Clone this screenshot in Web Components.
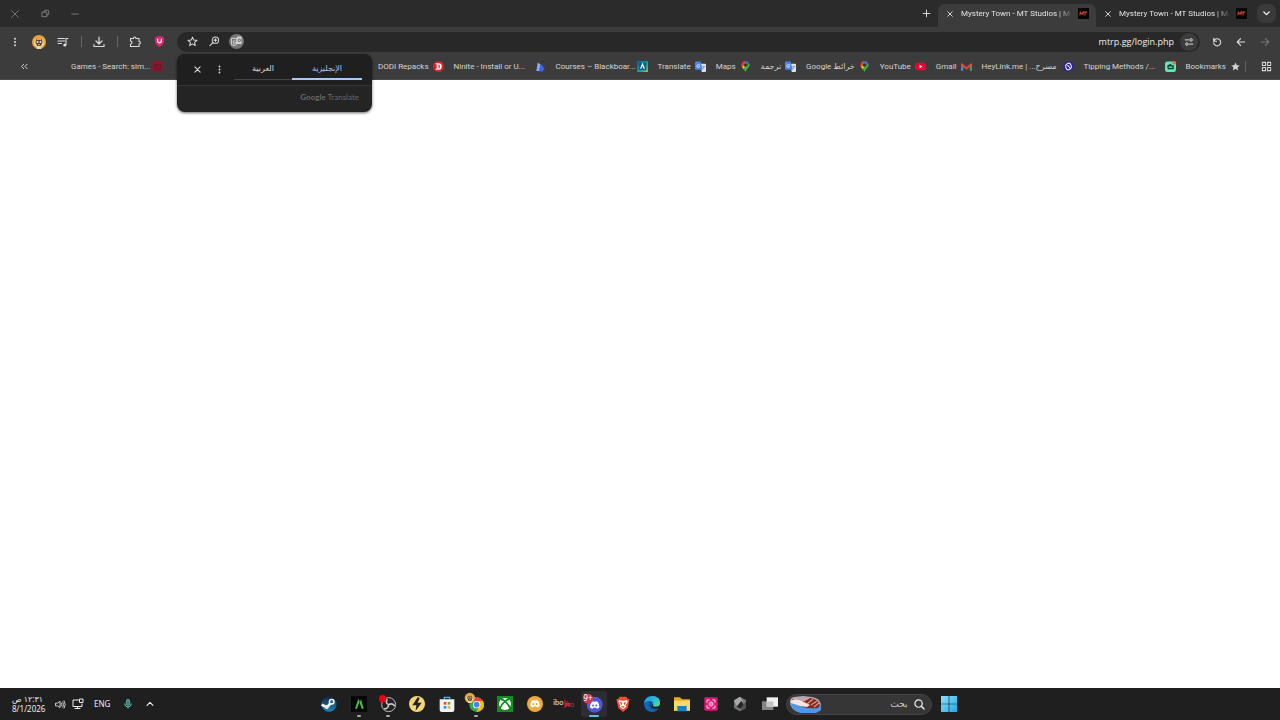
<!DOCTYPE html>
<html lang="ar">
<head>
<meta charset="utf-8">
<title>Mystery Town - MT Studios</title>
<style>
  html, body { margin: 0; height: 100%; background: #fff; }
  body { font-family: Roboto, "DejaVu Sans", sans-serif; font-size: 8px; line-height: 12px; color: #d5d5d5; }
</style>
</head>
<body>
<desk-top></desk-top>
<script>
const line = (d, w = 1.6) => `<path d="${d}" fill="none" stroke="currentColor" stroke-width="${w}" stroke-linecap="round" stroke-linejoin="round"/>`;
const discord = (x, y, s, bg) => `<g transform="translate(${x} ${y}) scale(${s})"><path fill="#fff" d="M4 1Q6 0 7 0l.6 1h2.8L11 0q1 0 3 1 3 4 3 9-2 2-4.500 2.500L11.500 11h-5l-1 1.500Q3 12 1 10 1 5 4 1z"/><ellipse cx="6.300" cy="7" rx="1.600" ry="1.800" fill="${bg}"/><ellipse cx="11.700" cy="7" rx="1.600" ry="1.800" fill="${bg}"/></g>`;
const avatar = `<circle cx="12" cy="12" r="12" fill="#e9a33c"/><path d="M4 17Q3 8 7 6l2 2h6l2-2q4 2 3 11l-4 3v4H8v-4z" fill="#f0d9a0"/><path d="M7 6l2 3 3-1 3 1 2-3 1 7-3 6H9l-3-6z" fill="#5d4327"/><circle cx="9.500" cy="12" r="1.600" fill="#eee"/><circle cx="14.500" cy="12" r="1.600" fill="#eee"/><path d="M10 16h4l-2 2z" fill="#eee"/>`;
const ICONS = {
  close: line('M5 5L19 19M19 5L5 19', 2.800),
  thinclose: line('M4 4L20 20M20 4L4 20', 1.800),
  restore: line('M5 9h10v10H5zM9 9V7q0-2 2-2h6q2 0 2 2v6q0 2-2 2h-2', 1.800),
  minimize: line('M4 12h16', 1.800),
  plus: line('M12 3v18M3 12h18', 2.600),
  down: line('M5 8l7 7 7-7', 3.600),
  up: line('M3 16l9-9 9 9', 3.200),
  more: '<g fill="currentColor"><circle cx="12" cy="4" r="2.400"/><circle cx="12" cy="12" r="2.400"/><circle cx="12" cy="20" r="2.400"/></g>',
  avatar,
  media: line('M2 5h13M2 10h13M2 15h7M18 18V5h4', 2.200) + '<circle cx="15.500" cy="18" r="3" fill="currentColor"/>',
  download: line('M12 2v13M6 10l6 6 6-6M2 17v4h20v-4', 2.400),
  puzzle: line('M3 5h6q0-3 2.500-3T14 5h6v6q3 0 3 2.500T20 16v5H3v-5q3 0 3-3t-3-3z', 2.200),
  shield: '<path d="M12 0q5 1 10 3v8q0 7-10 13Q2 18 2 11V3q5-2 10-3z" fill="#d92a77"/><path d="M8 6v5q0 4 4 4t4-4V6" fill="none" stroke="#fff" stroke-width="2.800"/>',
  star: line('M12 2.500l2.800 6.400 7 .6-5.300 4.600 1.600 6.900-6.100-3.700L5.900 21l1.600-6.900L2.200 9.500l7-.6z', 2.200),
  starfill: '<path fill="currentColor" d="M12 3l2.700 6 6.600.6-5 4.400 1.500 6.500-5.800-3.400-5.800 3.400 1.500-6.500-5-4.400 6.600-.6z"/>',
  zoom: '<circle cx="14" cy="9" r="7" fill="none" stroke="currentColor" stroke-width="2.200"/>' + line('M9 14l-7 7M11 9h6M14 6v6', 2.200),
  translate: '<circle cx="12" cy="12" r="12" fill="#747775"/><path d="M4 7h9l-2 11H6q-2 0-2-2z" fill="none" stroke="#d4d4d4" stroke-width="1.500"/><path d="M13 4h7v12h-9z" fill="#d4d4d4"/><path d="M10 11H7v4h3v-2M15 8h4M17 7v2l-2 4M16 10l3 3" fill="none" stroke="#d4d4d4" stroke-width="1.400"/><circle cx="16.500" cy="10" r="2" fill="none" stroke="#555" stroke-width="1.400"/>',
  tune: line('M3 7h8M13 17h8', 2.400) + '<g fill="none" stroke="currentColor" stroke-width="2.400"><circle cx="17" cy="7" r="3"/><circle cx="7" cy="17" r="3"/></g>',
  reload: line('M4 3v7h7M4.500 9.500A8.500 8.500 0 1 1 4 14', 2.600),
  back: line('M21 12H4M11 4l-8 8 8 8', 2.600),
  forward: line('M3 12h17M13 4l8 8-8 8', 2.600),
  chevrons: line('M10 6l-6 6 6 6M19 6l-6 6 6 6', 2.600),
  apps: line('M3 3h7v7H3zM14 3h7v7h-7zM3 14h7v7H3zM14 14h7v7h-7z', 2.200),
  mt: '<path d="M0 0h24v24H0z" fill="#070606"/><path d="M4 16l1-7 3 4 3-4v7M12 9h8M16 9l-1 7" fill="none" stroke="#d8452a" stroke-width="2.200"/>',
  ea: '<path d="M1 1h22v22H1z" fill="#9b0e2d"/><path d="M6 18V8h10M6 13h6M10 18h8V7" fill="none" stroke="#4a202b" stroke-width="2"/>',
  dodi: '<circle cx="12" cy="12" r="12" fill="#d8202c"/><path d="M6 5h7q6 0 6 7t-6 7H6v-2h2V7H6zm6 2v10q3 0 3-5t-3-5z" fill="#fff" fill-rule="evenodd"/>',
  ninite: '<path d="M6 3l7 5-1 14H3z" fill="#8dabfa"/><path d="M12 7l4 3 5 8-5 5H8z" fill="#3e62e8"/>',
  bb: '<linearGradient id="g" x2="1" y2="1"><stop stop-color="#1357a6"/><stop offset=".5" stop-color="#079b98"/><stop offset="1" stop-color="#8fc744"/></linearGradient><path d="M0 0h24v24H0z" fill="url(#g)"/><path d="M4 4h16v16H4z" fill="#0b5c93"/><path d="M8 17l4-10 4 10" fill="none" stroke="#fff" stroke-width="2.600"/>',
  gtrans: '<path d="M10 6h12q2 0 2 2v14q0 2-2 2h-7z" fill="#dfe3e8"/><path d="M2 1h10l5 18H2q-2 0-2-2V3q0-2 2-2z" fill="#4b84ea"/><path d="M10.500 8H7.500a3 3 0 1 0 2.500 3H8" fill="none" stroke="#fff" stroke-width="1.500"/><path d="M16 12h6M20 12q-1 4-4 6" fill="none" stroke="#667b99" stroke-width="1.500"/>',
  maps: '<path d="M12 0a9 9 0 0 0-7 3l7 6z" fill="#ea4335"/><path d="M5 3q-4 5-1 10l8-5z" fill="#ea4335"/><path d="M12 0q5 0 8 5l-8 4z" fill="#2d7cf0"/><path d="M4 13l4 5 8-10-4-2z" fill="#fbbc04"/><path d="M8 18q3 3 4 6 1-4 5-8 6-6 3-11z" fill="#34b853"/><circle cx="12" cy="9" r="3.500" fill="#333"/>',
  youtube: '<rect y="4" width="24" height="16" rx="5" fill="#f00033"/><path d="M10 8l6 4-6 4z" fill="#fff"/>',
  gmail: '<path d="M0 5v16h5V9z" fill="#4285f4"/><path d="M19 9v12h5V5z" fill="#34a853"/><path d="M1 4l11 9 11-9v6l-11 9L1 10z" fill="#ea4335"/>',
  heylink: '<path d="M12 0l4 2 5 2 1 5 2 3-3 4-1 5-5 1-3 2-4-2-5-2-1-5-2-3 3-4 1-5 5-1z" fill="#2c219c"/><path d="M6 14V9l4-4M18 10v5l-4 4M8 6l9 12M10 5h5l3 5M14 19H9l-3-5" fill="none" stroke="#fff" stroke-width="2.200"/>',
  tip: '<rect y="1" width="24" height="23" rx="5" fill="#62e7b3"/><path d="M5 10l7-4 3 3h4v9H6z" fill="#173b35"/><path d="M8 12h8v3H8z" fill="#62e7b3"/><circle cx="20" cy="4" r="4" fill="#ef674d"/>',
  volume: line('M2 9h4l5-4v14l-5-4H2zM14 9q2 3 0 6M17 6q4 6 0 12M20 4q5 8 0 16', 1.800),
  network: line('M13 4H2v13h18v-5M11 17v4M6 21h10', 2) + '<path d="M15 2h7v7h-7z" fill="none" stroke="currentColor" stroke-width="2"/>',
  mic: '<rect x="8" y="1" width="8" height="14" rx="4" fill="#3c7d76" stroke="#63c5b4" stroke-width="2"/><path d="M4 11q0 8 8 8t8-8M12 19v4" fill="none" stroke="#63c5b4" stroke-width="2.400"/>',
  steam: '<linearGradient id="s" x2="0" y2="1"><stop stop-color="#142543"/><stop offset="1" stop-color="#1689bd"/></linearGradient><circle cx="12" cy="12" r="11.500" fill="url(#s)"/><path d="M1 13l8 4 6-7" fill="none" stroke="#fff" stroke-width="4"/><circle cx="16" cy="8.500" r="4.500" fill="#fff"/><circle cx="16" cy="8.500" r="2.500" fill="#446583"/><circle cx="8.500" cy="16.500" r="3" fill="#dceaf2"/>',
  lambda: '<path d="M0 0h24v24H0z" fill="#050807"/><path d="M6 19l5-15 2 4-4 11zM13 10l2-5 4 14h-3z" fill="#4bbf49"/>',
  obs: '<circle cx="13" cy="13" r="10.500" fill="#242225" stroke="#bbb" stroke-width="1.500"/><g fill="none" stroke="#ccc" stroke-width="2.400"><path d="M13 13q-6-3-2-8M13 13q6-3 9 2M13 13q-1 7-7 6"/></g><circle cx="4" cy="4" r="5.500" fill="#f0000c"/>',
  bolt: '<circle cx="12" cy="12" r="12" fill="#f4d575"/><path d="M13 2L5 14h6l-1 8 9-12h-6l3-7z" fill="#222"/>',
  store: '<path d="M8 5V2h8v3" fill="none" stroke="#47b6ed" stroke-width="2"/><path d="M1 5h22v16q0 3-3 3H4q-3 0-3-3z" fill="#f1f2f5"/><path d="M7 9h4v4H7z" fill="#e94a32"/><path d="M13 9h4v4h-4z" fill="#72ad26"/><path d="M7 15h4v4H7z" fill="#239ee2"/><path d="M13 15h4v4h-4z" fill="#efb421"/>',
  chrome: '<circle cx="13" cy="13" r="11" fill="#33a852"/><path d="M3.500 7.500A11 11 0 0 1 22.500 7.500L13 9z" fill="#ea4335"/><path d="M22.500 7.500A11 11 0 0 1 13 24l4-9-2-7.500z" fill="#fbbc05"/><circle cx="13" cy="13" r="5.500" fill="#fff"/><circle cx="13" cy="13" r="4.200" fill="#4285f4"/><g transform="translate(-5 -5) scale(.65)">' + avatar + '</g>',
  xbox: '<path d="M0 0h24v24H0z" fill="#168b22"/><circle cx="12" cy="12" r="9" fill="#fff"/><path d="M6 5q3 0 6 3 3-3 6-3M4 19q2-6 8-11 6 5 8 11" fill="none" stroke="#168b22" stroke-width="2.600"/>',
  canary: '<circle cx="12" cy="12" r="12" fill="#efa83c"/>' + discord(3.900, 5.900, .9, '#efa83c'),
  ibopro: '<path d="M12 4l10 8-10 7z" fill="#811d29"/><text x="-4" y="13" font-family="Lato" font-size="11" fill="#eee">ibo</text><text x="13" y="17" font-family="Lato" font-size="7" fill="#eb3a4c">PRO</text>',
  discord: '<circle cx="13" cy="13" r="12" fill="#4e59d9"/>' + discord(4.900, 7.900, .9, '#4e59d9') + '<circle cx="3" cy="4" r="7.500" fill="#c83b51"/><text x="-4" y="8" font-family="Noto Sans" font-size="12" fill="#fff">9+</text>',
  brave: '<path d="M7 1h10l2 3 3 1-1 4-2 9-7 6-7-6-2-9-1-4 3-1z" fill="#f14d2b"/><path d="M6 6l4 1h4l4-1 1 3-3 5 1 2-5 4-5-4 1-2-3-5z" fill="#fff"/><path d="M7 9l4 1-1 4zM17 9l-4 1 1 4zM9 16l3-1 3 1-3 1.500z" fill="#e43c25"/>',
  edge: '<linearGradient id="e" x2="1" y2="1"><stop stop-color="#198de0"/><stop offset=".55" stop-color="#2dc3d4"/><stop offset="1" stop-color="#66da66"/></linearGradient><circle cx="12" cy="12" r="12" fill="#1267b8"/><path d="M0 11C1-3 24-4 24 10q0 7-8 6-4-1-2-4 0-5-5-5-7 0-9 4z" fill="url(#e)"/><path d="M8 9q-4 11 10 12 2 0 4-3-5 2-9-1-4-3-1-6-1-3-4-2z" fill="#104e93"/><path d="M14 12q-2 4 2 4 4 1 8-2v4l-5 1q-7 0-8-4 0-3 3-3z" fill="#1f2020"/>',
  folder: '<path d="M0 2h9l3 3h12v17H0z" fill="#e9a928"/><path d="M0 7h24v15H0z" fill="#ffd766"/><path d="M5 15h14v8H5z" fill="#1781bc"/>',
  record: '<rect x="2" y="2" width="20" height="20" rx="2" fill="#d91979"/><g fill="none" stroke="#ffd3e8" stroke-width="1.500"><path d="M6 10V6h4M14 6h4v4M6 14v4h4M14 18h4v-4"/><circle cx="12" cy="12" r="3"/></g><circle cx="12" cy="12" r="1.200" fill="#fff"/>',
  gem: '<path d="M12 1l9 5v12l-9 5-9-5V6z" fill="#777"/><path d="M12 1l5 8-9 7-5-9z" fill="#aaa"/><path d="M14 7l-7 9 5 3 6-5z" fill="#252525"/><path d="M15 16l6-8v10l-9 5z" fill="#4f5555"/>',
  taskview: '<path d="M0 8h17v13H0z" fill="#858585"/><path d="M7 2h17v14H7z" fill="#f0f0f0"/><path d="M7 8h10v8H7z" fill="#c3c3c3"/>',
  search: '<circle cx="10" cy="10" r="8" fill="none" stroke="currentColor" stroke-width="2.600"/>' + line('M16 16l6 6', 3),
  windows: '<linearGradient id="w" x2="1" y2="1"><stop stop-color="#89e0fb"/><stop offset="1" stop-color="#22a9e9"/></linearGradient><path d="M0 0h11.500v11.500H0zM12.500 0H24v11.500H12.500zM0 12.500h11.500V24H0zM12.500 12.500H24V24H12.500z" fill="url(#w)"/>'
};

function define(tag, html, setup) {
  const template = document.createElement('template');
  template.innerHTML = `<style>
    * { box-sizing: border-box; }
    button, input { font: inherit; color: inherit; border: 0; background: none; padding: 0; margin: 0; outline: 0; }
    button { display: flex; align-items: center; justify-content: center; }
    a { color: inherit; text-decoration: none; }
  </style>` + html;
  customElements.define(tag, class extends HTMLElement {
    constructor() {
      super();
      this.attachShadow({ mode: 'open' }).append(template.content.cloneNode(true));
    }
    connectedCallback() { if (setup) setup(this, this.shadowRoot); }
  });
}

define('ui-icon', `<style>
  :host { display: block; flex: none; line-height: 0; }
  svg { display: block; overflow: visible; }
</style><svg viewBox="0 0 24 24" aria-hidden="true"></svg>`, (host, root) => {
  const size = host.getAttribute('size') || 12;
  const svg = root.querySelector('svg');
  svg.setAttribute('width', size);
  svg.setAttribute('height', size);
  svg.innerHTML = ICONS[host.getAttribute('name')];
});

define('icon-button', `<style>
  :host { display: block; flex: none; width: 24px; height: 20px; }
  button { width: 100%; height: 100%; }
</style><button type="button"><ui-icon></ui-icon></button>`, (host, root) => {
  const icon = document.createElement('ui-icon');
  icon.setAttribute('name', host.getAttribute('icon'));
  icon.setAttribute('size', host.getAttribute('size') || 12);
  root.querySelector('ui-icon').replaceWith(icon);
  root.querySelector('button').setAttribute('aria-label', host.getAttribute('icon'));
});
</script>
<script>
define('browser-tab', `<style>
  :host { display: flex; align-items: center; width: 158px; height: 23px; padding: 0 7px 4px 6px; gap: 5px; border-radius: 7px 7px 0 0; }
  :host([active]) { background: #3c3c3c; }
  icon-button { width: 12px; height: 12px; }
  .title { flex: 1; overflow: hidden; white-space: nowrap; color: #e3e3e3; -webkit-mask-image: linear-gradient(90deg, #000 88%, #0003); }
  .fav { margin-left: 3px; }
</style>
<icon-button icon="close" size="8"></icon-button>
<span class="title"><slot></slot></span>
<ui-icon class="fav" name="mt" size="11"></ui-icon>`);

define('title-bar', `<style>
  :host { display: flex; align-items: flex-end; height: 27px; background: #2b2b2b; color: #dcdcdc; }
  .controls { display: flex; align-self: center; flex: 1; color: #8c8c8c; }
  .controls icon-button { width: 30px; }
  .new { height: 27px; }
  .list { align-self: center; width: 19px; height: 19px; margin: 0 4px 0 3px; border-radius: 7px; background: #3a3a3a; color: #eee; }
</style>
<div class="controls"><icon-button icon="thinclose" size="10"></icon-button><icon-button icon="restore" size="11"></icon-button><icon-button icon="minimize" size="10"></icon-button></div>
<icon-button class="new" icon="plus" size="9"></icon-button>
<browser-tab active>Mystery Town - MT Studios | MT</browser-tab>
<browser-tab>Mystery Town - MT Studios | MT</browser-tab>
<icon-button class="list" icon="down" size="9"></icon-button>`);

define('tool-bar', `<style>
  :host { display: flex; align-items: center; height: 29px; padding: 0 3px; background: #3c3c3c; color: #dcdcdc; }
  i { width: 1px; height: 11px; margin: 0 5px 0 6px; background: #666; }
  .omni { display: flex; align-items: center; flex: 1; height: 20px; margin: 0 5px 0 6px; padding: 0 2px 0 4px; border-radius: 10px; background: #282828; }
  .omni icon-button { width: 22px; }
  input { flex: 1; min-width: 0; height: 20px; padding-right: 6px; text-align: right; font-family: "Open Sans", sans-serif; font-size: 9px; color: #eee; }
  .omni .site { width: 18px; height: 18px; border-radius: 9px; background: #3c3c3c; }
  .off { color: #777; }
</style>
<icon-button icon="more" size="10"></icon-button><icon-button icon="avatar" size="14"></icon-button><icon-button icon="media" size="12"></icon-button><i></i>
<icon-button icon="download" size="12"></icon-button><i></i><icon-button icon="puzzle" size="12"></icon-button><icon-button icon="shield" size="11"></icon-button>
<div class="omni"><icon-button icon="star" size="11"></icon-button><icon-button icon="zoom" size="11"></icon-button><icon-button icon="translate" size="15"></icon-button>
<input type="text" value="mtrp.gg/login.php" aria-label="Address"><icon-button class="site" icon="tune" size="10"></icon-button></div>
<icon-button icon="reload" size="10"></icon-button><icon-button icon="back" size="10"></icon-button><icon-button class="off" icon="forward" size="10"></icon-button>`);

define('book-mark', `<style>
  :host { display: block; flex: none; }
  a { display: flex; align-items: center; gap: 4px; white-space: nowrap; }
  .cut { width: 77px; }
</style><a href="#"><span><slot></slot></span></a>`, (host, root) => {
  const icon = document.createElement('ui-icon');
  icon.setAttribute('name', host.getAttribute('icon'));
  icon.setAttribute('size', 11);
  root.querySelector('a').append(icon);
  if (host.hasAttribute('cut')) root.querySelector('span').className = 'cut';
});

define('bookmarks-bar', `<style>
  :host { display: flex; align-items: center; gap: 10px; height: 24px; padding: 0 7px 2px 12px; background: #3c3c3c; border-bottom: 1px solid #4a4a4a; }
  .first { margin: 0 auto 0 25px; }
  i { width: 1px; height: 11px; margin: 0 3px 0 -6px; background: #606060; }
  .apps { width: 14px; }
</style>
<icon-button icon="chevrons" size="9"></icon-button>
<book-mark class="first" icon="ea" cut>Games - Search: sim...</book-mark>
<book-mark icon="dodi">DODI Repacks</book-mark>
<book-mark icon="ninite" cut>Ninite - Install or U...</book-mark>
<book-mark icon="bb" cut>Courses – Blackboar...</book-mark>
<book-mark icon="gtrans">Translate</book-mark>
<book-mark icon="maps">Maps</book-mark>
<book-mark icon="gtrans"><bdi>ترجمة</bdi></book-mark>
<book-mark icon="maps">Google خرائط</book-mark>
<book-mark icon="youtube">YouTube</book-mark>
<book-mark icon="gmail">Gmail</book-mark>
<book-mark icon="heylink" cut>HeyLink.me | <bdi>مسرح...</bdi></book-mark>
<book-mark icon="tip" cut>Tipping Methods /...</book-mark>
<book-mark icon="starfill">Bookmarks</book-mark>
<i></i>
<icon-button class="apps" icon="apps" size="11"></icon-button>`);

define('translate-bubble', `<style>
  :host { display: block; width: 195px; border-radius: 8px; background: #242424; box-shadow: 0 1px 3px #0009; color: #ddd; overflow: hidden; }
  .top { display: flex; align-items: center; height: 32px; padding: 0 10px 0 9px; background: #1f1f1f; border-bottom: 1px solid #343434; }
  .top icon-button { width: 22px; }
  .tabs { display: grid; grid-template-columns: 58px 70px; margin-left: 4px; }
  .tabs button { height: 21px; border-bottom: 1px solid #444; font-weight: 500; }
  .tabs .on { border-bottom: 2px solid #a8c7fa; color: #a8c7fa; }
  .brand { height: 26px; padding: 5px 13px 0; text-align: right; font-family: Lato, sans-serif; color: #686868; }
  b { font-weight: 700; }
</style>
<div class="top"><icon-button icon="close" size="9"></icon-button><icon-button icon="more" size="9"></icon-button>
<div class="tabs"><button type="button">العربية</button><button type="button" class="on">الإنجليزية</button></div></div>
<div class="brand"><b>Google</b> Translate</div>`);

define('task-button', `<style>
  :host { display: grid; place-items: center; }
  button { position: relative; width: 26px; height: 26px; border-radius: 3px; }
  :host([active]) button { background: #2d2d33; }
  .mark { display: none; position: absolute; bottom: 0; left: 11px; width: 4px; height: 2px; border-radius: 1px; background: #aaa; }
  :host([running]) .mark { display: block; }
  :host([active]) .mark { display: block; left: 8px; width: 10px; background: #55c5ee; }
</style><button type="button"><span class="mark"></span></button>`, (host, root) => {
  const icon = document.createElement('ui-icon');
  icon.setAttribute('name', host.getAttribute('icon'));
  icon.setAttribute('size', 16);
  const button = root.querySelector('button');
  button.prepend(icon);
  button.setAttribute('aria-label', host.getAttribute('icon'));
});

define('task-bar', `<style>
  :host { display: grid; grid-template-columns: 1fr auto 1fr; height: 32px; background: #1f1f1f; color: #eee; }
  .tray { display: flex; align-items: center; padding-left: 12px; font-family: "Noto Sans", "DejaVu Sans", sans-serif; }
  .clock { width: 40px; line-height: 10px; }
  .clock span { display: block; }
  .tray icon-button { width: 17px; }
  .lang { margin: 0 7px 0 8px; }
  .tray .wide { width: 22px; }
  .center { display: flex; align-items: center; }
  .apps { display: grid; grid-template-columns: repeat(16, 1fr); width: 470px; }
  label { display: flex; align-items: center; width: 146px; height: 21px; margin-left: 1px; padding: 0 6px 0 2px; gap: 6px; border: 1px solid #454545; border-radius: 11px; background: #363636; }
  input { flex: 1; min-width: 0; direction: rtl; text-align: right; font-size: 9px; color: #ddd; }
  input::placeholder { color: #ccc; opacity: 1; }
  .start { width: 34px; }
</style>
<div class="tray"><div class="clock"><span><bdi dir="rtl">١٢:٣١ ص</bdi></span><span>8/1/2026</span></div>
<icon-button icon="volume" size="11"></icon-button><icon-button icon="network" size="12"></icon-button><span class="lang">ENG</span>
<icon-button class="wide" icon="mic" size="10"></icon-button><icon-button class="wide" icon="up" size="8"></icon-button></div>
<div class="center"><div class="apps">
<task-button icon="steam"></task-button><task-button icon="lambda" running></task-button><task-button icon="obs" running></task-button><task-button icon="bolt"></task-button>
<task-button icon="store"></task-button><task-button icon="chrome" running></task-button><task-button icon="xbox"></task-button><task-button icon="canary"></task-button>
<task-button icon="ibopro"></task-button><task-button icon="discord" active></task-button><task-button icon="brave"></task-button><task-button icon="edge"></task-button>
<task-button icon="folder"></task-button><task-button icon="record"></task-button><task-button icon="gem"></task-button><task-button icon="taskview"></task-button></div>
<label><svg width="33" height="17" viewBox="0 0 33 17" aria-hidden="true"><path d="M1 8Q0 2 5 1l9-1 9 1q8 1 9 8l-1 6-14 1H9Q3 14 1 8z" fill="#b9a6b5"/><path d="M1 7q4-1 9 2 8 3 22 0v5l-5 3H11Q3 14 1 7z" fill="#4f97e8"/><path d="M3 3q5 3 12 2l6-3q8 1 10 7l-2 3q-9 1-15-1L6 8z" fill="#7a2c2a"/><path d="M2 5q4-3 11 0l8 4-3 2Q9 10 2 7z" fill="#f3e5e0"/><path d="M15 5l5-3M18 8l6-5M22 9l6-4M25 11l5-4" stroke="#e39a78" stroke-width="1.200"/></svg>
<input type="text" placeholder="بحث" aria-label="بحث"><ui-icon name="search" size="11"></ui-icon></label>
<icon-button class="start" icon="windows" size="16"></icon-button></div><span></span>`);

define('desk-top', `<style>
  :host { display: flex; flex-direction: column; min-height: 100vh; }
  .chrome { position: relative; }
  translate-bubble { position: absolute; left: 177px; top: 54px; }
  main { flex: 1; background: #fff; }
</style>
<header class="chrome"><title-bar></title-bar><tool-bar></tool-bar><bookmarks-bar></bookmarks-bar><translate-bubble></translate-bubble></header>
<main></main>
<task-bar></task-bar>`);
</script>
</body>
</html>
